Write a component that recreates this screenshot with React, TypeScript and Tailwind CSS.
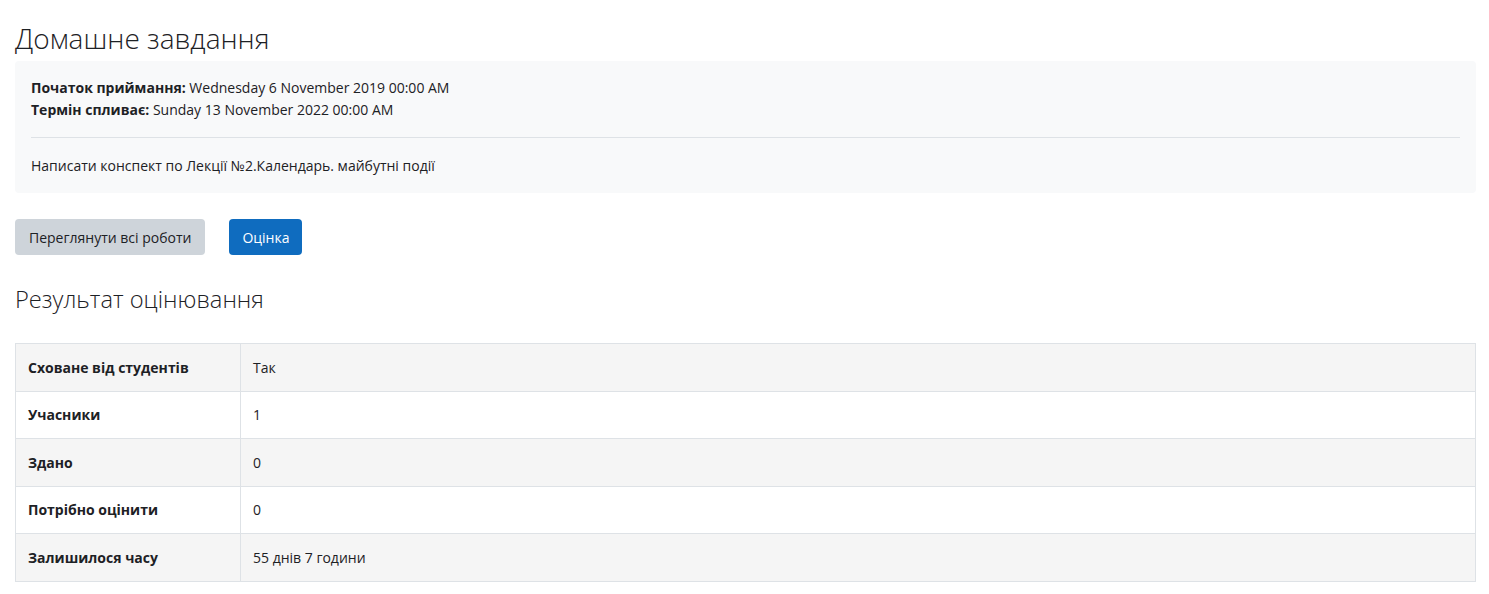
import React from 'react'

const rows = [
  { label: 'Сховане від студентів', value: 'Так' },
  { label: 'Учасники', value: '1' },
  { label: 'Здано', value: '0' },
  { label: 'Потрібно оцінити', value: '0' },
  { label: 'Залишилося часу', value: '55 днів 7 години' },
]

const App: React.FC = () => {
  return (
    <div className="bg-white pl-[15px] pr-[13px] pt-[18px] text-[#1d2125] font-['Open_Sans',sans-serif]">
      <h2 className="text-[28px] font-light leading-[40px] mb-[3px]">Домашне завдання</h2>

      <div className="bg-[#f8f9fa] rounded px-4 pt-[16px] pb-[16px] text-[14px]">
        <div className="leading-[22px]">
          <div><span className="font-bold">Початок приймання:</span> Wednesday 6 November 2019 00:00 AM</div>
          <div><span className="font-bold">Термін спливає:</span> Sunday 13 November 2022 00:00 AM</div>
        </div>
        <hr className="border-t border-[#dee2e6] mt-[16px] mb-[17px]" />
        <p className="leading-[22px]">Написати конспект по Лекції №2.Календарь. майбутні події</p>
      </div>

      <div className="flex gap-6 mt-[26px]">
        <button className="h-9 px-[14px] rounded bg-[#ced4da] text-[14px] text-[#1d2125]">Переглянути всі роботи</button>
        <button className="h-9 px-[13px] rounded bg-[#0f6cbf] text-[14px] text-white">Оцінка</button>
      </div>

      <h3 className="text-[23.7px] font-light leading-[32px] mt-[28px] mb-[28px]">Результат оцінювання</h3>

      <table className="w-full border-collapse text-[14px]">
        <tbody>
          {rows.map((r, i) => (
            <tr key={r.label} className={i % 2 === 0 ? 'bg-[#f5f5f5]' : 'bg-white'}>
              <th className="w-[225px] h-[47.5px] border border-[#dee2e6] px-3 text-left font-bold">{r.label}</th>
              <td className="h-[47.5px] border border-[#dee2e6] px-3">{r.value}</td>
            </tr>
          ))}
        </tbody>
      </table>
    </div>
  )
}

export default App
